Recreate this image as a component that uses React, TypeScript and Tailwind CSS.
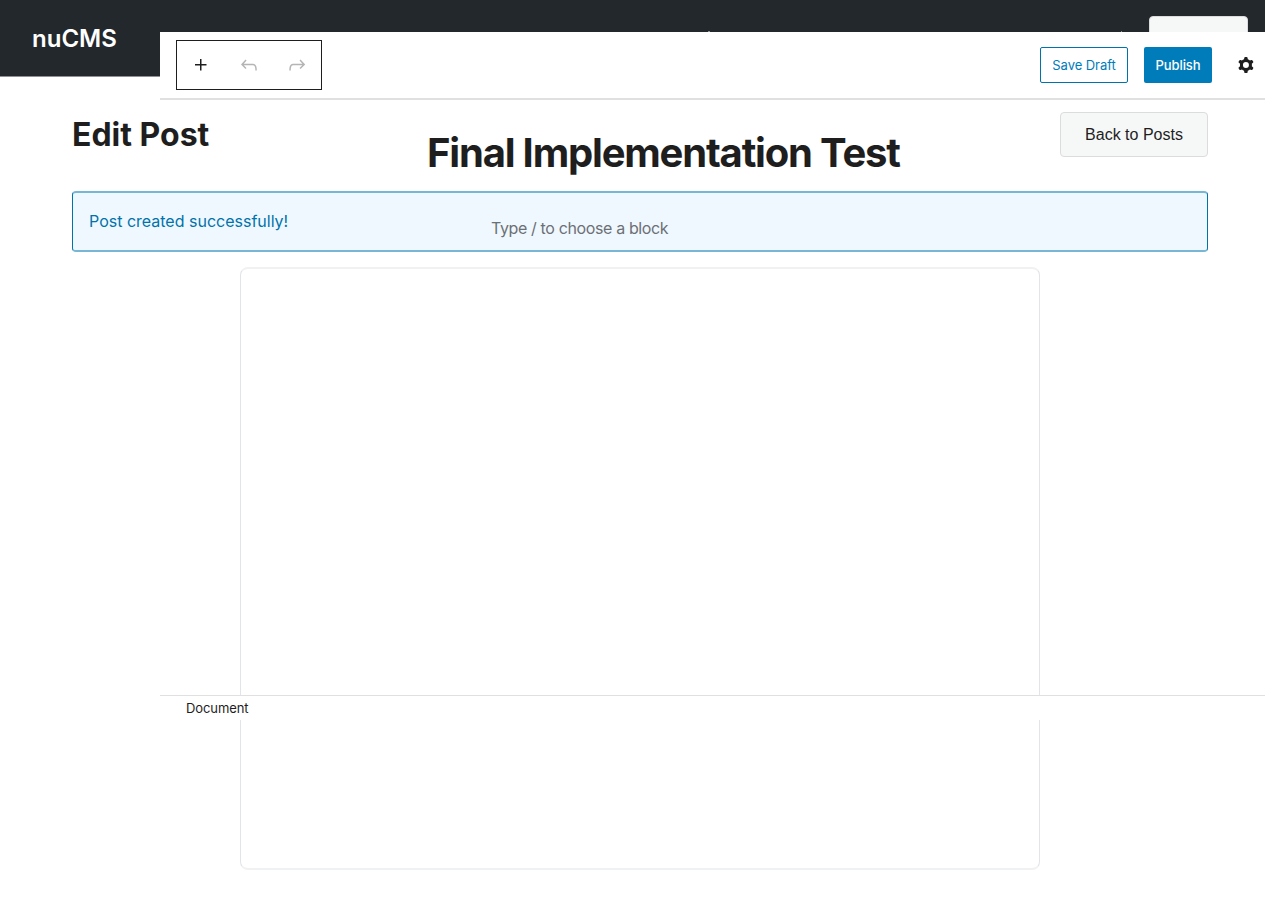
const Plus = () => (
  <svg width="24" height="24" viewBox="0 0 24 24" fill="#1e1e1e">
    <path d="M11 12.5V17.5H12.5V12.5H17.5V11H12.5V6H11V11H6V12.5H11Z" />
  </svg>
);
const Undo = () => (
  <svg width="24" height="24" viewBox="0 0 24 24" fill="#b5b5b5">
    <path d="M18.3 11.7c-.6-.6-1.4-.9-2.3-.9H6.7l2.9-3.3-1.1-1-4.5 5L8.5 16l1-1-2.7-2.7H16c.5 0 .9.2 1.3.5 1 1 1 3.4 1 4.5v.3h1.5v-.2c0-1.5 0-4.3-1.5-5.7z" />
  </svg>
);
const Redo = () => (
  <svg width="24" height="24" viewBox="0 0 24 24" fill="#b5b5b5">
    <path d="M15.6 6.5l-1.1 1 2.9 3.3H8c-.9 0-1.7.3-2.3.9-1.4 1.5-1.4 4.2-1.4 5.6v.2h1.5v-.3c0-1.1 0-3.5 1-4.5.3-.3.7-.5 1.3-.5h9.2L14.5 15l1.1 1.1 4.6-4.6-4.6-5z" />
  </svg>
);
const Cog = () => (
  <svg width="24" height="24" viewBox="0 0 24 24" fill="#1e1e1e">
    <path
      fillRule="evenodd"
      clipRule="evenodd"
      d="M10.289 4.836A1 1 0 0111.275 4h1.306a1 1 0 01.987.836l.244 1.466c.787.26 1.503.679 2.108 1.218l1.393-.522a1 1 0 011.216.437l.653 1.13a1 1 0 01-.23 1.273l-1.148.944a6.025 6.025 0 010 2.435l1.149.946a1 1 0 01.23 1.272l-.653 1.13a1 1 0 01-1.216.437l-1.394-.522c-.605.54-1.32.958-2.108 1.218l-.244 1.466a1 1 0 01-.987.836h-1.306a1 1 0 01-.986-.836l-.244-1.466a5.995 5.995 0 01-2.108-1.218l-1.394.522a1 1 0 01-1.217-.436l-.653-1.131a1 1 0 01.23-1.272l1.149-.946a6.026 6.026 0 010-2.435l-1.148-.944a1 1 0 01-.23-1.272l.653-1.131a1 1 0 011.217-.437l1.393.522a5.994 5.994 0 012.108-1.218l.244-1.466zM14.929 12a3 3 0 11-6 0 3 3 0 016 0z"
    />
  </svg>
);

function EditorOverlay() {
  return (
    <div className="absolute top-8 right-0 left-40 flex h-[688px] flex-col">
      <div className="flex h-[68px] shrink-0 items-center border-b-2 border-[#e0e0e0] bg-white pl-4">
        <div className="flex h-[50px] w-[146px] border border-[#1e1e1e]">
          <button className="flex w-12 items-center justify-center"><Plus /></button>
          <button className="flex w-12 items-center justify-center"><Undo /></button>
          <button className="flex w-12 items-center justify-center"><Redo /></button>
        </div>
        <button className="mr-4 ml-auto h-9 w-[88px] rounded-[2px] border border-[#0073aa] pt-0.5 text-[13px] tracking-[-0.05px] text-[#007cba]">
          Save Draft
        </button>
        <button className="mr-[22px] h-9 w-[68px] rounded-[2px] bg-[#007cba] pt-0.5 text-[13px] font-medium tracking-[-0.1px] text-white">
          Publish
        </button>
        <button className="mr-[7px]"><Cog /></button>
      </div>
      <div className="flex grow flex-col">
        <h2 className="mt-[25px] pl-[267px] text-[40px] leading-[56px] font-bold tracking-[-1.19px]">
          Final Implementation Test
        </h2>
        <p className="mt-[33px] pl-[331px] text-base leading-7 tracking-[-0.37px] text-[#6c7075]">Type / to choose a block</p>
      </div>
      <div className="h-[25px] shrink-0 border-t border-[#e0e0e0] bg-white pt-px pl-[26px] text-[13px] leading-[23px] tracking-[-0.1px]">Document</div>
    </div>
  );
}

export default function App() {
  return (
    <div className="relative h-[901px] overflow-hidden bg-white font-['Inter',sans-serif] text-[#1e1e1e]">
      <header className="flex h-[77px] items-start justify-between border-b border-[#8e9194] bg-[#23282d] pr-[17px] pl-8">
        <div className="pt-[19px] text-2xl leading-10 font-semibold text-white">nuCMS</div>
        <div className="flex">
          <span className="mt-[31px] mr-[411px] h-1 w-0.5 bg-[#8e9194]" />
          <span className="mt-[31px] mr-[27px] h-1 w-px bg-[#8e9194]" />
          <div className="mt-4 h-11 w-[99px] rounded-[4px] border border-[#dcdcde] bg-[#f6f7f7]" />
        </div>
      </header>
      <main className="mx-auto mt-[35px] ml-[72px] w-[1136px]">
        <div className="flex items-start justify-between">
          <h1 className="text-[32px] leading-[45px] font-bold">Edit Post</h1>
          <button className="h-[45px] w-[148px] rounded-[4px] border border-[#dcdcde] bg-[#f6f7f7] font-['Liberation_Sans',Arial,sans-serif] text-base">
            Back to Posts
          </button>
        </div>
        <div className="mt-[34px] h-[61px] rounded-[4px] border-x border-y-2 border-x-[#0073aa] border-y-[#78b7d4] bg-[#f0f8ff] px-4 text-base leading-[57px] text-[#0073aa]">
          Post created successfully!
        </div>
        <div className="mx-auto mt-[15px] h-[603px] w-[800px] rounded-lg border-x border-y-2 border-x-[#e2e4e7] border-y-[#f0f1f3] bg-white" />
      </main>
      <EditorOverlay />
    </div>
  );
}
